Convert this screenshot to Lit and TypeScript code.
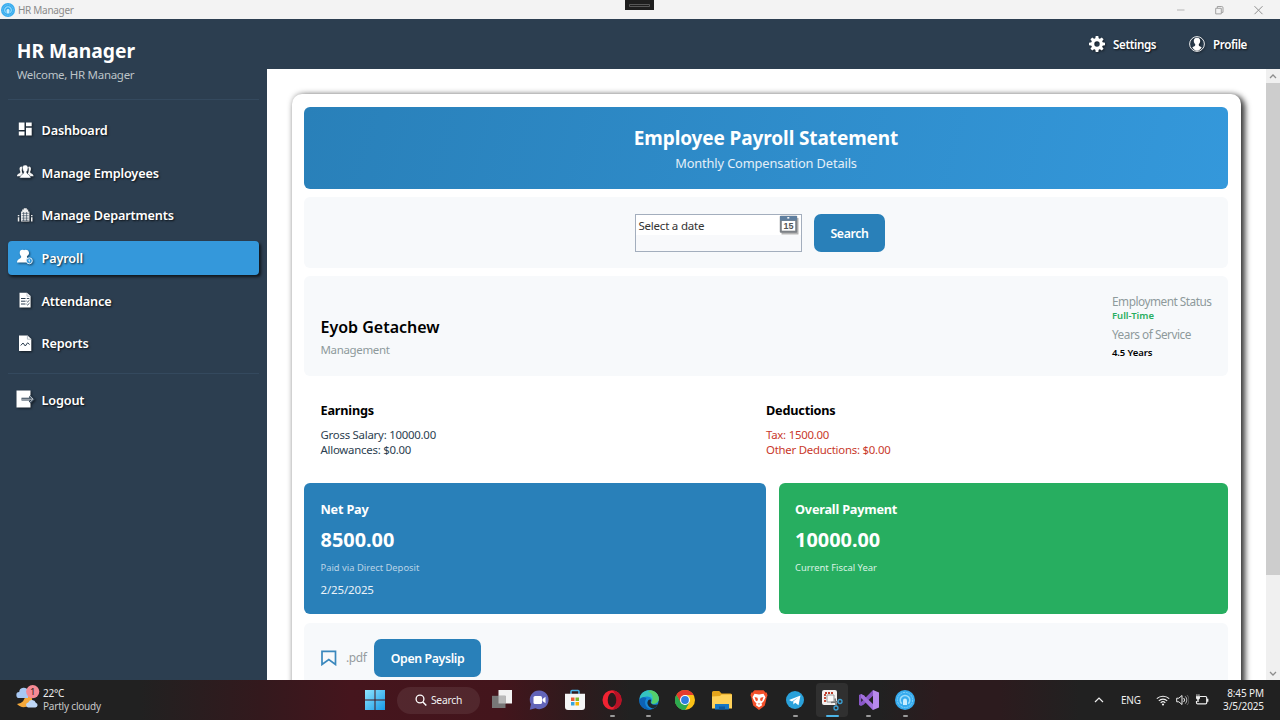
import { LitElement, html, css, svg } from "lit";
import { customElement, property } from "lit/decorators.js";
import { classMap } from "lit/directives/class-map.js";

const brandIcon = html`<svg viewBox="0 0 20 20">
  <circle cx="10" cy="10" r="10" fill="#36abee" />
  <circle cx="10" cy="10" r="7.6" fill="none" stroke="#7dcff8" stroke-width="1" stroke-dasharray="2 .8" />
  <path d="M6.800 13.800a4.800 4.800 0 1 1 6.400 0" fill="none" stroke="#9adcfb" stroke-width="1.500" />
  <path d="M8 15v-4.500a2 2 0 0 1 4 0V15z" fill="#c9edfe" />
</svg>`;

const navIcons: Record<string, unknown> = {
  dashboard: svg`<path d="M1.800 1.500h5.700v7.500H1.800zM9 1.500h5.700v3.700H9zM1.800 10.600h5.700v3.900H1.800zM9 6.800h5.700v7.700H9z" fill="#fff"/>`,
  employees: svg`<path d="M4.2 2.6C2.6 2.8 2.3 4.4 2.7 6c.3 1.2.8 1.6.6 2.6C2.800 9.700 0 9.700 0 12.300h3.600c.6-1.500 2-1.700 2.400-2.400C4.600 8 4.300 5 5.600 2.900zM12.300 2.600c1.600.2 1.900 1.800 1.500 3.400-.3 1.200-.8 1.600-.6 2.600.5 1.100 3.300 1.100 3.300 3.700h-3.600c-.6-1.500-2-1.700-2.400-2.400 1.400-1.900 1.700-4.900.4-7z" fill="#f4f4f4"/><path d="M8.250 1c-2.200 0-3.200 1.700-2.700 3.900.2 1.300.7 2.200 1.300 2.800.2 3-3.800 2.400-4.200 6.300h11.200c-.4-3.900-4.400-3.300-4.200-6.300.6-.6 1.100-1.500 1.300-2.800.5-2.200-.5-3.900-2.700-3.900z" fill="#fff" stroke="#2c3e50" stroke-width=".5"/>`,
  departments: svg`<path d="M4 14.500V4.500h1.200V2.500h1.600V1.200h3v1.300h1.400v2h1.200v10z" fill="#eee"/><path d="M.8 8h1.500v1.300H.8zM.8 10.300h1.500v4.200H.8zM14 8h1.500v1.300H14zM14 10.300h1.500v4.200H14z" fill="#eee"/><path d="M4.700 6.300h7M4.700 8.700h7M4.700 11.100h7M4.700 13.300h7M6.600 5v9M9.600 5v9" stroke="#2c3e50" stroke-width=".6"/>`,
  payroll: svg`<path d="M5.600.8C3.300.8 2.500 2.400 2.800 4.600c.2 1.300.8 2.200 1.400 2.900.2 2.900-4.200 2-4.200 6h9.500c-.6-2.300.2-3.700 1-4.600-.5-.4-.7-.8-.6-1.400.6-.7 1.900-1.600 2.100-2.900.3-2.300-1.200-3.800-3.400-3.800-.8 0-1.300.4-1.600.4S6.400.8 5.600.8z" fill="#fff"/><circle cx="12.300" cy="11.800" r="3" fill="#3498db" stroke="#e8f4fc" stroke-width="1"/><path d="M12.300 10.300v3M11.300 11.300h1.600" stroke="#e8f4fc" stroke-width=".8"/>`,
  attendance: svg`<path d="M2.500.8h7.500L13.600 4v11.400H2.500z" fill="#fff"/><path d="M4 6.500h4.500M4 9.200h4.500M4 12h4.500" stroke="#2c3e50" stroke-width="1"/><path d="M9.800 6.500h2.500M9.500 9l1.100 1 1.900-1.800M9.500 12l1.100 1 1.900-1.800" fill="none" stroke="#2c3e50" stroke-width=".9"/><path d="M10 1v3.200h3.600" fill="none" stroke="#93a0ac" stroke-width=".6"/>`,
  reports: svg`<path d="M2 .4h8.600L14.300 4v12H2z" fill="#fff"/><path d="M10.400.6v3.600h3.800" fill="none" stroke="#93a0ac" stroke-width=".7"/><path d="M3.700 10.500 6 8l2.300 3 2.300-3.200 2 1.700" fill="none" stroke="#2c3e50" stroke-width="1"/>`,
  logout: svg`<path d="M-.5-.5h14v17h-14z" fill="#fff"/><path d="M4.500 8.200h11M12.800 5l3.300 3.200-3.300 3.300" fill="none" stroke="#2c3e50" stroke-width="2.800"/><path d="M4.500 8.200h11M12.800 5l3.300 3.200-3.300 3.300" fill="none" stroke="#d5d9dd" stroke-width=".9"/>`,
};

@customElement("nav-item")
class NavItem extends LitElement {
  @property() icon = "";
  @property() label = "";
  @property({ type: Boolean }) active = false;
  static styles = css`
    :host { display: block; }
    .item {
      display: flex; align-items: center; height: 34.7px; padding: 0 8.500px; box-sizing: border-box;
      border-radius: 4px; color: #fff; gap: 8px; font-weight: 600; font-size: 12.7px; line-height: 18px; letter-spacing: -0.16px;
    }
    .active { background: #3498db; box-shadow: 1.5px 2px 3px rgba(0, 0, 0, 0.65); }
    svg { width: 17px; height: 17px; overflow: visible; filter: drop-shadow(1px 1px 1px rgba(0, 0, 0, 0.55)); }
    span { text-shadow: 1px 1px 2px rgba(0, 0, 0, 0.75); white-space: nowrap; }
  `;
  render() {
    return html`<div class=${classMap({ item: true, active: this.active })}>
      <svg viewBox="0 0 17 17">${navIcons[this.icon]}</svg><span>${this.label}</span>
    </div>`;
  }
}

@customElement("title-bar")
class TitleBar extends LitElement {
  static styles = css`
    :host { display: flex; position: relative; height: 19px; background: #f3f3f3; align-items: center; color: #8b8b8b; font-size: 10px; box-sizing: border-box; }
    .brand { width: 14px; height: 14px; margin: 0 3px 0 1px; }
    .brand svg { display: block; }
    .name { letter-spacing: -0.3px; line-height: 18px; }
    .grip { position: absolute; left: 625px; top: 0; width: 29px; height: 10px; background: #1e1e1e; }
    .grip svg { display: block; }
    .controls { margin-left: auto; display: flex; }
    .controls svg { width: 39px; height: 18px; display: block; }
    .controls { padding-right: 2px; }
  `;
  render() {
    return html`<div class="brand">${brandIcon}</div><span class="name">HR Manager</span>
      <div class="grip"><svg viewBox="0 0 29 10"><path d="M4.500 4.500h20v2h-20z" fill="none" stroke="#666" stroke-width=".8"/></svg></div>
      <div class="controls">
        <svg viewBox="0 0 39 18"><path d="M16 9h7.500" stroke="#b5b5b5" fill="none"/></svg>
        <svg viewBox="0 0 39 18"><path d="M15.700 7.300h5.600v5.600h-5.600zM17.300 7V5.500h4.400q1.300 0 1.300 1.300V11.400h-1.400" stroke="#999" fill="none" stroke-width=".9"/></svg>
        <svg viewBox="0 0 39 18"><path d="m15.500 5.200 8 8m0-8-8 8" stroke="#909090" fill="none"/></svg>
      </div>`;
  }
}

@customElement("side-bar")
class SideBar extends LitElement {
  static styles = css`
    :host { display: block; width: 267px; flex: none; background: #2c3e50; padding: 0 8.500px 0 8px; box-sizing: border-box; }
    .head { height: 81px; box-sizing: border-box; padding: 19.500px 8.700px 0; border-bottom: 1px solid #34495e; color: #fff; }
    .title { font-size: 19.250px; font-weight: 700; line-height: 24px; white-space: nowrap; }
    .sub { font-size: 11.500px; line-height: 16px; margin-top: 4.500px; color: #bdc3c7; white-space: nowrap; letter-spacing: -0.29px; }
    nav { display: flex; flex-direction: column; gap: 8px; padding: 12.500px 0 12.500px; border-bottom: 1px solid #34495e; }
    .foot { padding-top: 8.500px; }
  `;
  render() {
    const items = [
      ["dashboard", "Dashboard"], ["employees", "Manage Employees"], ["departments", "Manage Departments"],
      ["payroll", "Payroll"], ["attendance", "Attendance"], ["reports", "Reports"],
    ];
    return html`<div class="head"><div class="title">HR Manager</div><div class="sub">Welcome, HR Manager</div></div>
      <nav>${items.map(([icon, label]) => html`<nav-item icon=${icon} label=${label} ?active=${icon === "payroll"}></nav-item>`)}</nav>
      <div class="foot"><nav-item icon="logout" label="Logout"></nav-item></div>`;
  }
}

@customElement("payroll-card")
class PayrollCard extends LitElement {
  static styles = css`
    :host { display: block; color: #000; }
    .card {
      margin: 25px 25px 0 24.500px; padding: 13px 12.500px; width: 949px; height: 640px; box-sizing: border-box; background: #fff;
      border-radius: 10px; box-shadow: 4px 3px 6px rgba(0, 0, 0, 0.7), 1px 0 6px rgba(0, 0, 0, 0.4);
      display: flex; flex-direction: column; white-space: nowrap;
    }
    .hero { height: 81.500px; border-radius: 6px; background: linear-gradient(105deg, #2980b9, #3498db); color: #fff; text-align: center; box-sizing: border-box; padding-top: 19px; flex: none; }
    .hero h1 { margin: 0; font-size: 19px; line-height: 25px; font-weight: 700; letter-spacing: -0.11px; }
    .hero p { margin: 3px 0 0; font-size: 12.800px; line-height: 18px; color: #e4eff8; letter-spacing: -0.12px; }
    .panel { background: #f7f9fb; border-radius: 6px; margin-top: 8.500px; box-sizing: border-box; flex: none; display: flex; }
    .filter { height: 70.500px; justify-content: center; align-items: center; gap: 12.500px; padding: 1px 12.500px 0 0; }
    .date { width: 167px; height: 38px; border: 1px solid #a3aebd; box-sizing: border-box; display: flex; justify-content: space-between; align-items: flex-start; padding: 0 2px 0 3px; }
    .date { background: linear-gradient(#fff 20px, #f8f9fb 20px); font-size: 11.500px; line-height: 22px; color: #333; letter-spacing: -0.22px; }
    .date svg { width: 20px; height: 20px; margin-top: 0.500px; letter-spacing: 0; }
    .btn { background: #2980b9; color: #fff; border-radius: 7px; height: 38px; font-weight: 600; font-size: 12.300px; line-height: 39px; text-align: center; letter-spacing: -0.36px; }
    .search { width: 71px; }
    .open { width: 107px; }
    .person { height: 99.500px; justify-content: space-between; padding: 16px 16.500px; }
    .who { padding-top: 24px; }
    .who b { display: block; font-size: 16px; line-height: 22px; font-weight: 600; }
    .muted { color: #8e9a9b; font-size: 11.800px; line-height: 16px; letter-spacing: -0.48px; }
    .who .muted { font-size: 11.500px; margin-top: 4px; letter-spacing: -0.35px; }
    .status { width: 99.500px; display: flex; flex-direction: column; padding-top: 1px; }
    .status b { font-size: 9.500px; line-height: 13px; font-weight: 600; }
    .status .full { color: #27ae60; margin-bottom: 4px; }
    .status .yrs { margin-top: 4px; letter-spacing: -0.100px; }
    .cols { display: grid; grid-template-columns: 445.500px 1fr; padding: 25.500px 16.500px 0; height: 107.500px; box-sizing: border-box; flex: none; font-size: 11.400px; line-height: 15.500px; color: #2c3e50; letter-spacing: -0.24px; }
    .cols h2 { margin: 0 0 7.500px; font-size: 12.700px; line-height: 18px; color: #000; font-weight: 700; letter-spacing: -0.200px; }
    .cols .neg { color: #c9392b; }
    .cols .neg h2 { color: #000; }
    .totals { display: grid; grid-template-columns: 462px 449.500px; gap: 12.500px; height: 131px; flex: none; }
    .total { border-radius: 6px; background: #2980b9; color: #fff; padding: 17px 16.500px 0; }
    .green { background: #27ae60; }
    .total h2 { margin: 0; font-size: 12.700px; line-height: 18px; font-weight: 700; letter-spacing: -0.200px; }
    .total .sum { font-size: 19.900px; line-height: 26px; font-weight: 700; margin-top: 9px; }
    .total small { display: block; font-size: 9.400px; line-height: 14px; margin-top: 8px; color: #b9d3e6; }
    .green small { color: #dcf3e5; }
    .total .day { font-size: 11.500px; line-height: 16px; margin-top: 7px; color: #eaf2f8; letter-spacing: -0.15px; }
    .slip { height: 90px; padding: 16.500px; align-items: flex-start; }
    .slip svg { width: 16px; height: 16px; margin-top: 11px; }
    .slip .ext { color: #969c9f; font-size: 12px; line-height: 38px; width: 20px; margin: 0 8px 0 9.500px; letter-spacing: -0.400px; }
  `;
  render() {
    return html`<section class="card">
      <header class="hero"><h1>Employee Payroll Statement</h1><p>Monthly Compensation Details</p></header>
      <div class="panel filter">
        <div class="date"><span>Select a date</span>
          <svg viewBox="0 0 20 20"><path d="M2.500 3H19.500v16.500H2.500z" fill="#777" opacity=".55"/><rect x=".8" y=".8" width="17.400" height="17" rx="1" fill="#7d8186"/><path d="M1 1h17v4.500H1z" fill="#5f7f9f"/><path d="M2.800 6h13.400v9.700H2.800z" fill="#fff"/><path d="M8.300 2.800h2" stroke="#fff" stroke-width="1.500"/><text x="9.500" y="14.200" text-anchor="middle" font-size="9" font-weight="700" font-family="Liberation Sans, sans-serif" fill="#555">15</text></svg>
        </div>
        <div class="btn search">Search</div>
      </div>
      <div class="panel person">
        <div class="who"><b>Eyob Getachew</b><div class="muted">Management</div></div>
        <div class="status"><span class="muted">Employment Status</span><b class="full">Full-Time</b><span class="muted">Years of Service</span><b class="yrs">4.5 Years</b></div>
      </div>
      <div class="cols">
        <div><h2>Earnings</h2><div>Gross Salary: 10000.00</div><div>Allowances: $0.00</div></div>
        <div class="neg"><h2>Deductions</h2><div>Tax: 1500.00</div><div>Other Deductions: $0.00</div></div>
      </div>
      <div class="totals">
        <div class="total"><h2>Net Pay</h2><div class="sum">8500.00</div><small>Paid via Direct Deposit</small><div class="day">2/25/2025</div></div>
        <div class="total green"><h2>Overall Payment</h2><div class="sum">10000.00</div><small>Current Fiscal Year</small></div>
      </div>
      <div class="panel slip">
        <svg viewBox="0 0 16 16"><path d="M1 1.300h13.500v13.200L7.800 9.600 1 14.500z" fill="none" stroke="#3a88bd" stroke-width="1.700"/></svg>
        <span class="ext">.pdf</span><div class="btn open">Open Payslip</div>
      </div>
    </section>`;
  }
}

const apps: { name: string; art: unknown; state?: string }[] = [
  { name: "tasks", art: svg`<path d="M6.500 0H20v13.500H6.500z" fill="#f2f2f2"/><path d="M0 5.800h13.500V18H0z" fill="#777"/><path d="M6.500 5.800h7v7.700h-7z" fill="#b9b9b9"/>` },
  { name: "chat", art: svg`<path d="M10.500.5a9.300 9.300 0 1 1-4 17.800L.8 19.800l1.100-5.600A9.300 9.300 0 0 1 10.500.5z" fill="#6264b8"/><rect x="4.500" y="6" width="8.500" height="8" rx="1.600" fill="#fff"/><path d="m13.500 9 3-2.200v6.400l-3-2.200z" fill="#fff"/>` },
  { name: "store", art: svg`<path d="M6 4V1.600Q6 .6 7 .6h6q1 0 1 1V4" fill="none" stroke="#48b4ea" stroke-width="1.500"/><path d="M0 3.700h20V17q0 3-3 3H3q-3 0-3-3z" fill="#f5f5f5"/><path d="M6 7.500h3.500V11H6z" fill="#e95a32"/><path d="M10.500 7.500H14V11h-3.500z" fill="#7cb82f"/><path d="M6 12h3.500v3.500H6z" fill="#35a4dd"/><path d="M10.500 12H14v3.500h-3.500z" fill="#f7b500"/>` },
  { name: "opera", state: "run", art: svg`<ellipse cx="10" cy="10" rx="9.500" ry="9.800" fill="#f02332"/><path d="M10 .2a9.800 9.800 0 0 1 0 19.600c5-2 5-17.600 0-19.600z" fill="#b81226"/><ellipse cx="10" cy="10" rx="4.300" ry="7.200" fill="#271c1e"/>` },
  { name: "edge", state: "run", art: svg`<circle cx="10" cy="10" r="9.800" fill="#1688d8"/><path d="M.5 9C1.500 2.800 6 .2 10.300.2 16 .2 20 4.500 19.800 9c-.2 3-2.600 4.800-5.300 4.800-2 0-2.500-.8-2-1.600 1.800-3-1-6-4.800-5.700C4 6.800 1.200 8 .5 9z" fill="#35c4c0"/><path d="M11 .3c5 .2 9 4.200 8.800 8.700-.2 3-2.600 4.800-5.300 4.800-2 0-2.500-.8-2-1.600C15 8 14 3 9 2z" fill="#55cf6c"/><path d="M7.500 8.300c-3.300 4.300-.5 10.400 5 11.100C7 21 0 17 .3 10.300 2 7 5 6.500 7.500 8.300z" fill="#0d62b5"/><path d="M12 10.500c-1.200 3 1.500 5.400 7 3.800-1.300 1.800-3 3.800-5.500 4.200-4.500-1.500-6.500-5.500-4-8.500 1.200-1 2.600-.7 2.500.5z" fill="#1d2830"/>` },
  { name: "chrome", art: svg`<circle cx="10" cy="10" r="10" fill="#fbc116"/><path d="M1.340 5A10 10 0 0 1 18.660 5H10v5z" fill="#e33b2e"/><path d="M1.340 5A10 10 0 0 0 10 20l4.300-7.500L10 10 5.700 12.500z" fill="#2da94f"/><path d="M1.340 5 5.700 12.500 10 10V5z" fill="#e33b2e"/><path d="M1.340 5A10 10 0 0 0 10 20l4.300-7.500H5.700z" fill="#2da94f"/><circle cx="10" cy="10" r="5" fill="#fff"/><circle cx="10" cy="10" r="3.900" fill="#2f7de1"/>` },
  { name: "files", art: svg`<path d="M0 2.500Q0 1 1.500 1h5.700L9.500 3.500h9Q20 3.500 20 5v3H0z" fill="#e5a51b"/><path d="M0 6.500 8 6l1.500-1.500H20V18.500H0z" fill="#ffd25a"/><path d="M3 14h14v5.500H3z" fill="#1677c5"/><path d="M7 16.500h6v3H7z" fill="#0d589d"/>` },
  { name: "brave", art: svg`<path d="M5.500.3h9l2.300 2.400 1-.1.700 3-.8 2-1.900 8L10 20l-5.800-4.400-1.900-8-.8-2 .7-3 1 .1z" fill="#f4502a"/><path d="m5.500 3.800 4.500.7 4.500-.7 2 3.400-1.700 3.700-2.300 2.600.6 1.700L10 17.300l-3.100-2.100.6-1.700-2.300-2.600-1.700-3.700z" fill="#fff"/><path d="m5.500 7 3 .7.500 2.600-2 1zM14.500 7l-3 .7-.5 2.600 2 1zM8.600 13.500h2.800L10 14.800z" fill="#f4502a"/>` },
  { name: "telegram", state: "run", art: svg`<circle cx="10" cy="10" r="9" fill="#2aa1da"/><path d="m4 10 11.500-4.600-2 9.800-3.300-2.400-1.700 1.700-.3-3L13 7.500l-6 4z" fill="#fff"/>` },
  { name: "snip", state: "active", art: svg`<rect x="0" y="0" width="15" height="15" rx="2" fill="#f4f1f0"/><path d="M3 12V3h9" fill="none" stroke="#bf3e2b" stroke-width="1.800" stroke-dasharray="2 1"/><path d="M5 5h7v7H5z" fill="#fafafa" stroke="#999"/><path d="m9 12.500 8-1M13 8.500l1.500 8" stroke="#777" stroke-width="1.500"/><circle cx="18" cy="11.500" r="2" fill="none" stroke="#3ba0d4" stroke-width="1.300"/><circle cx="14" cy="18" r="2" fill="none" stroke="#3ba0d4" stroke-width="1.300"/>` },
  { name: "studio", state: "run", art: svg`<path d="M14 0v20l6-2.500v-15z" fill="#b88aed"/><path d="M14 0v5.800L4.500 14.700 2 16l-2-1V5l2-1 2.500 1.300L14 14.200V20L2.200 8v4z" fill="#8957c7"/><path d="m2 4 2.500 1.300L14 14.200V20L2 7.800z" fill="#a271db"/>` },
  { name: "hr", state: "run", art: null },
];

@customElement("task-bar")
class TaskBar extends LitElement {
  static styles = css`
    :host {
      display: grid; grid-template-columns: 363.500px 1fr auto; height: 40px; color: #f0f0f0; flex: none; white-space: nowrap;
      background: linear-gradient(90deg, #212121 0, #212121 140px, #33191d 260px, #45151d 350px, #43151c 500px, #2d1b1d 580px, #212121 630px, #212121 880px, #2c1b1e 940px, #2c1b1e 1000px, #212121 1080px);
    }
    .weather { display: flex; padding-left: 16px; align-items: flex-start; font-size: 10px; line-height: 13px; gap: 3px; letter-spacing: -0.200px; }
    .weather svg { width: 24px; height: 26px; margin-top: 4px; }
    .weather div { padding-top: 7px; }
    .weather .sky { color: #c8c8c8; }
    .apps { display: flex; align-items: center; }
    .win { width: 20px; height: 20px; margin: 0 12px 0 1.500px; }
    .pill { width: 83px; height: 27px; border-radius: 14px; background: rgba(255, 255, 255, 0.08); display: flex; align-items: center; justify-content: center; gap: 4px; font-size: 10.300px; letter-spacing: -0.250px; margin-right: 3.500px; }
    .pill svg { width: 12px; height: 12px; }
    .app { width: 32.700px; height: 34px; margin: 0 2px; border-radius: 4px; position: relative; display: flex; align-items: center; justify-content: center; }
    .app svg { width: 20px; height: 20px; overflow: visible; }
    .run::after, .active::after { content: ""; position: absolute; bottom: 0; left: 14px; width: 5px; height: 2px; border-radius: 1px; background: #9a9a9a; }
    .active { background: #303030; }
    .active::after { left: 10px; width: 13px; background: #4cb5e8; }
    .tray { display: flex; align-items: center; padding-right: 16px; font-size: 10px; letter-spacing: -0.100px; }
    .tray svg { display: block; }
    .eng { margin: 0 15px 0 17px; }
    .icons { display: flex; gap: 6px; }
    .clock { text-align: right; line-height: 13.500px; font-size: 10px; margin-left: 14px; }
  `;
  render() {
    return html`<div class="weather">
        <svg viewBox="0 0 24 26"><path d="M9 11a8 8 0 0 1-8 9c4 5 13 4 15-3 1-4-3-7-7-6z" fill="#f5a93b"/><path d="M3.500 14a3 3 0 0 1-.3-6A4.500 4.500 0 0 1 12 7v7z" fill="#a8c8f2"/><path d="M12 23.500a2.600 2.600 0 0 1 .3-5.100 4 4 0 0 1 7.500.4 2.400 2.400 0 0 1-.4 4.700z" fill="#bfd8f7"/><circle cx="16.700" cy="7.600" r="6.600" fill="#f58a94"/><text x="16.700" y="11.100" text-anchor="middle" font-size="9.500" fill="#2c1d20">1</text></svg>
        <div>22°C<br /><span class="sky">Partly cloudy</span></div>
      </div>
      <div class="apps">
        <svg class="win" viewBox="0 0 20 20"><defs><linearGradient id="w" x2="1" y2="1"><stop stop-color="#8fe4fd"/><stop offset="1" stop-color="#189ae8"/></linearGradient></defs><path d="M0 0h9.500v9.500H0zM10.500 0H20v9.500h-9.500zM0 10.500h9.500V20H0zM10.500 10.500H20V20h-9.500z" fill="url(#w)"/></svg>
        <div class="pill"><svg viewBox="0 0 12 12"><circle cx="5" cy="5" r="3.900" fill="none" stroke="#fff" stroke-width="1.300"/><path d="m7.900 7.900 3.400 3.600" stroke="#fff" stroke-width="1.400"/></svg>Search</div>
        ${apps.map((a) => html`<div class="app ${a.state ?? ""}">${a.art ? html`<svg viewBox="0 0 20 20">${a.art}</svg>` : brandIcon}</div>`)}
      </div>
      <div class="tray">
        <svg width="10" height="8" viewBox="0 0 10 8"><path d="m1 6 4-4 4 4" fill="none" stroke="#eee" stroke-width="1.200"/></svg>
        <span class="eng">ENG</span>
        <div class="icons">
          <svg width="14" height="12" viewBox="0 0 14 12"><path d="M.8 4.700a9 9 0 0 1 12.400 0M2.800 6.800a6 6 0 0 1 8.400 0M4.700 8.800a3.300 3.300 0 0 1 4.600 0" fill="none" stroke="#eee" stroke-width="1.100"/><circle cx="7" cy="10.500" r="1.100" fill="#eee"/></svg>
          <svg width="13" height="12" viewBox="0 0 13 12"><path d="M.7 4.200h2.100L6 1.500v9L2.800 7.800H.7z" fill="none" stroke="#eee"/><path d="M7.700 4a3 3 0 0 1 0 4" fill="none" stroke="#eee"/><path d="M9.300 2.400a5 5 0 0 1 0 7.200" fill="none" stroke="#ccc" stroke-width=".9"/><path d="M11 1a7 7 0 0 1 0 10" fill="none" stroke="#777" stroke-width=".8"/></svg>
          <svg width="14" height="12" viewBox="0 0 14 12"><path d="M5 2.500h5.500q1.200 0 1.200 1.200v5q0 1.200-1.200 1.200H2.700q-1.200 0-1.200-1.200V7M12.800 4.700v3" fill="none" stroke="#eee" stroke-width="1.200"/><path d="M1 2.200h4v1.500q0 1.500-1.300 1.800V8H2.300V5.500Q1 5.200 1 3.700zM1.500.3h.9v2h-.9zM3.500.3h.9v2h-.9z" fill="#eee"/></svg>
        </div>
        <div class="clock">8:45 PM<br />3/5/2025</div>
      </div>`;
  }
}

const teeth = [0, 45, 90, 135, 180, 225, 270, 315];

@customElement("app-root")
export class AppRoot extends LitElement {
  static styles = css`
    :host { display: flex; flex-direction: column; width: 1280px; height: 720px; overflow: hidden; font-family: "Noto Sans", "Open Sans", sans-serif; }
    .body { flex: 1; min-height: 0; display: flex; }
    .main { flex: 1; min-width: 0; display: flex; flex-direction: column; }
    .top { height: 50px; flex: none; background: #2c3e50; display: flex; justify-content: flex-end; align-items: center; gap: 33px; padding-right: 33px; }
    .link { display: flex; align-items: center; gap: 8px; color: #fff; font-weight: 600; font-size: 11.600px; letter-spacing: -0.400px; text-shadow: 1px 1px 2px rgba(0, 0, 0, 0.75); }
    .link svg { width: 16px; height: 16px; filter: drop-shadow(1px 1px 1px rgba(0, 0, 0, 0.5)); overflow: visible; }
    .scroll { flex: 1; min-height: 0; display: flex; background: #fff; }
    .view { flex: 1; min-width: 0; overflow: hidden; }
    .bar { width: 14px; background: #f0f0f0; display: flex; flex-direction: column; }
    .bar svg { width: 14px; height: 14px; display: block; }
    .thumb { height: 492px; background: #cdcdcd; }
    .bar .down { margin-top: auto; }
  `;
  render() {
    return html`<title-bar></title-bar>
      <div class="body">
        <side-bar></side-bar>
        <div class="main">
          <div class="top">
            <div class="link"><svg viewBox="0 0 16 16">${teeth.map((a) => svg`<path d="M6.200 3 6.700 0h2.600l.5 3z" fill="#fff" transform="rotate(${a} 8 8)"/>`)}<circle cx="8" cy="8" r="4.300" fill="none" stroke="#fff" stroke-width="3.200"/></svg><span>Settings</span></div>
            <div class="link"><svg viewBox="0 0 16 16"><circle cx="8" cy="8" r="7.400" fill="none" stroke="#fff" stroke-width=".9"/><path d="M8 1.800c-2.300 0-3.400 1.600-3.200 3.500.1 1.200.8 2.400 1.500 3.100 0 2-1.600 2-3 2.900C4.500 13.500 6 14.700 8 14.700s3.500-1.200 4.700-3.400c-1.400-.9-3-.9-3-2.900.7-.7 1.400-1.900 1.500-3.100C11.400 3.400 10.300 1.800 8 1.800z" fill="#fff"/></svg><span>Profile</span></div>
          </div>
          <div class="scroll">
            <div class="view"><payroll-card></payroll-card></div>
            <div class="bar">
              <svg viewBox="0 0 14 14"><path d="M4 9l3-3 3 3" fill="none" stroke="#8d8d8d" stroke-width="1.300"/></svg>
              <div class="thumb"></div>
              <svg class="down" viewBox="0 0 14 14"><path d="M4 6l3 3 3-3" fill="none" stroke="#8d8d8d" stroke-width="1.300"/></svg>
            </div>
          </div>
        </div>
      </div>
      <task-bar></task-bar>`;
  }
}
